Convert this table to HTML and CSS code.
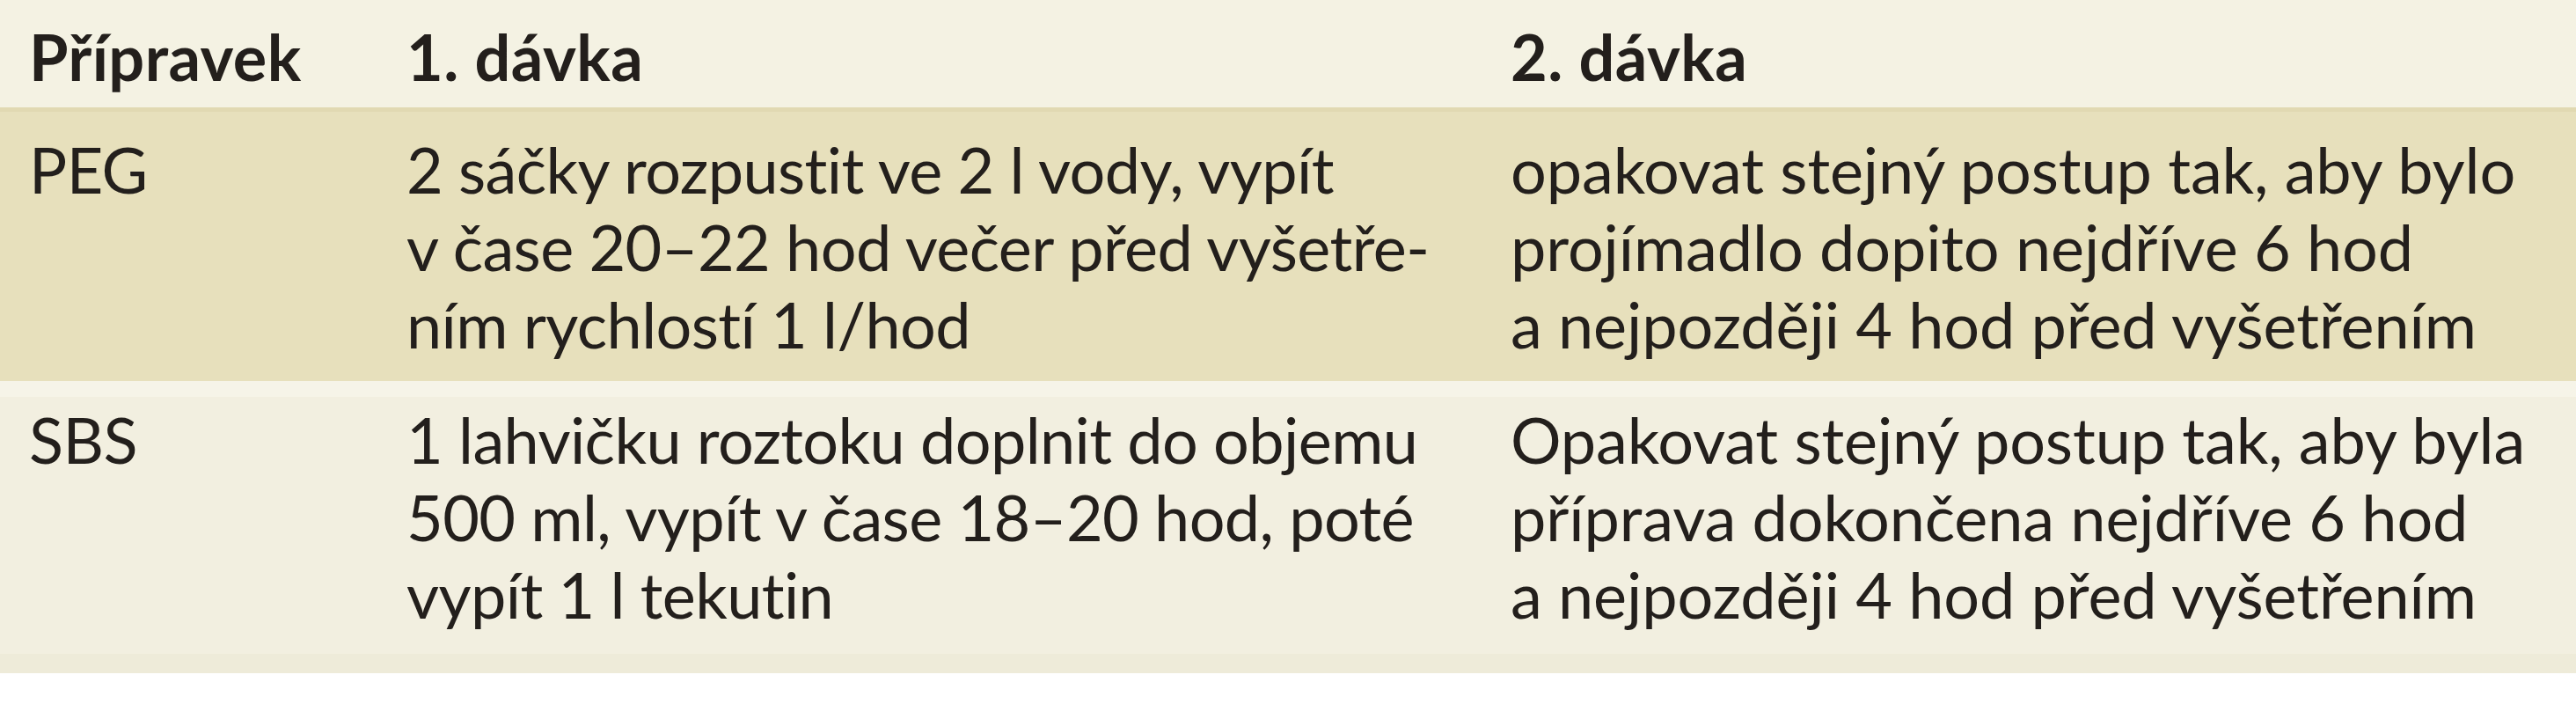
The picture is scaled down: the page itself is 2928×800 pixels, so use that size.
FILE: index.html
```html
<!DOCTYPE html>
<html lang="cs">
<head>
<meta charset="utf-8">
<title>Příprava</title>
<link rel="stylesheet" href="styles.css">
</head>
<body>
<div class="table">
  <div class="row head">
    <div class="cell">Přípravek</div>
    <div class="cell">1. dávka</div>
    <div class="cell">2. dávka</div>
  </div>
  <div class="row r1">
    <div class="cell">PEG</div>
    <div class="cell">2 sáčky rozpustit ve 2 l vody, vypít<br>v čase 20–22 hod večer před vyšetře-<br>ním rychlostí 1 l/hod</div>
    <div class="cell wide">opakovat stejný postup tak, aby bylo<br>projímadlo dopito nejdříve 6 hod<br>a nejpozději 4 hod před vyšetřením</div>
  </div>
  <div class="row r2">
    <div class="cell">SBS</div>
    <div class="cell">1 lahvičku roztoku doplnit do objemu<br>500 ml, vypít v čase 18–20 hod, poté<br>vypít 1 l tekutin</div>
    <div class="cell wide">Opakovat stejný postup tak, aby byla<br>příprava dokončena nejdříve 6 hod<br>a nejpozději 4 hod před vyšetřením</div>
  </div>
</div>
</body>
</html>
```

FILE: styles.css
```css
html, body {
  margin: 0;
  padding: 0;
  background: #ffffff;
}
.table {
  font-family: "Lato", "Open Sans", sans-serif;
  font-size: 72px;
  line-height: 88px;
  color: #231f1c;
  letter-spacing: -0.6px;
}
.row {
  display: grid;
  grid-template-columns: 429px 1255px 1fr;
  padding-left: 33px;
  white-space: nowrap;
}
.wide {
  letter-spacing: -0.1px;
}
.head {
  background: #f4f2e3;
  font-weight: 700;
  letter-spacing: 0.4px;
  padding-top: 20px;
  padding-bottom: 14px;
}
.r1 {
  background: #e7e0bc;
  border-top: 5px solid #e1d9b2;
  padding-top: 21px;
  padding-bottom: 21px;
}
.r2 {
  background: #f2efe0;
  border-top: 18px solid #f6f4e8;
  padding-top: 4px;
  padding-bottom: 24px;
  border-bottom: 22px solid #eeebd9;
}
```
